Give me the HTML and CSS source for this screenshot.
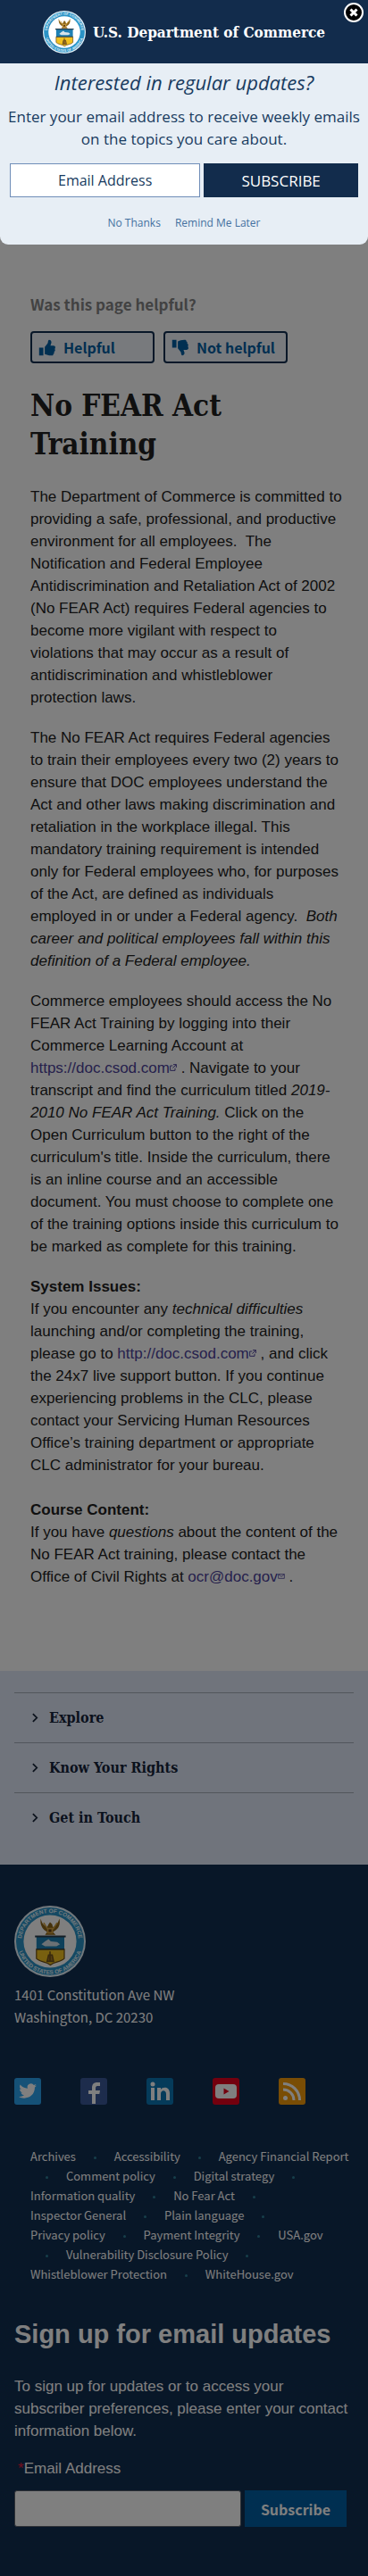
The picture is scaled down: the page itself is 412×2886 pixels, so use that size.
FILE: index.html
```html
<!DOCTYPE html>
<html lang="en">
<head>
<meta charset="utf-8">
<meta name="viewport" content="width=device-width, initial-scale=1">
<title>No FEAR Act Training | U.S. Department of Commerce</title>
<link rel="stylesheet" href="styles.css">
</head>
<body>
<svg class="defs" width="0" height="0" aria-hidden="true">
  <defs>
    <path id="ring-top" d="M10 50a40 40 0 0 1 80 0"/>
    <path id="ring-bottom" d="M4 50a46 46 0 0 0 92 0"/>
    <symbol id="seal" viewBox="0 0 100 100">
      <circle cx="50" cy="50" r="50" fill="#e4f1f8"/>
      <circle cx="50" cy="50" r="47.500" fill="#2a93c6"/>
      <text class="seal-text"><textPath href="#ring-top" startOffset="50%">DEPARTMENT OF COMMERCE</textPath></text>
      <text class="seal-text"><textPath href="#ring-bottom" startOffset="50%">UNITED STATES OF AMERICA</textPath></text>
      <circle cx="50" cy="50" r="37" fill="#fff"/>
      <path d="M37 18c2 8 5 10 9 12l2-4 2-3 3 3 1 4c4-2 7-5 9-12 2 8-1 14-6 17l-3 2 4 4H43l3-4-4-3c-4-4-6-9-5-16z" fill="#8a6418"/>
      <path d="M41 24l6 9M60 24l-6 9M47 32h6v6h-6z" stroke="#d0a040" stroke-width="2" fill="#5d3b12"/>
      <path d="M31 43h39v18H31z" fill="#1d80b4"/>
      <path d="M31 61h39v13c-4 5-13 4-19.500 9C44 78 35 79 31 74z" fill="#f0c020" stroke="#6b4d15" stroke-width="1.500"/>
      <path d="M29 43h43" stroke="#263c4c" stroke-width="2.500"/>
      <path d="M31 61h39" stroke="#263c4c" stroke-width="1.500"/>
      <path d="M38 54l5-4 5-3 3 3 9 1 4 3-5 3H43z" fill="#d6e3ea"/>
      <path d="M50 64v15M46 78h9l-2-9h-5z" stroke="#71521b" stroke-width="2" fill="#a87a20"/>
    </symbol>
    <symbol id="thumb" viewBox="0 0 24 24">
      <path d="M1 12h6v11H1zM9 11l4-5c1-1 0-4 2-5 3 0 4 3 3 5l-1 3h4c4 0 3 4 2 5 1 1 1 3-1 4 1 1 0 3-1 3 0 2-1 2-3 2-4 0-6-1-9-2z"/>
    </symbol>
    <symbol id="external" viewBox="0 0 12 12">
      <path d="M5 3H1v8h8V7M6 1h5v5M11 1L5 7" fill="none" stroke="currentColor" stroke-width="1.500"/>
    </symbol>
    <symbol id="envelope" viewBox="0 0 12 9">
      <path d="M1 1h10v7H1zM1 1l5 4 5-4" fill="none" stroke="currentColor" stroke-width="1.200"/>
    </symbol>
  </defs>
</svg>

<main class="content">
  <section class="feedback" aria-labelledby="feedback-title">
    <h2 class="feedback-title" id="feedback-title">Was this page helpful?</h2>
    <div class="feedback-actions">
      <button class="feedback-button" type="button"><svg class="thumb" aria-hidden="true"><use href="#thumb"/></svg>Helpful</button>
      <button class="feedback-button" type="button"><svg class="thumb thumb-down" aria-hidden="true"><use href="#thumb"/></svg>Not helpful</button>
    </div>
  </section>

  <article class="article">
    <h1 class="article-title">No FEAR Act Training</h1>
    <p>The Department of Commerce is committed to providing a safe, professional, and productive environment for all employees.&nbsp; The Notification and Federal Employee Antidiscrimination and Retaliation Act of 2002 (No FEAR Act) requires Federal agencies to become more vigilant with respect to violations that may occur as a result of antidiscrimination and whistleblower protection laws.</p>
    <p>The No FEAR Act requires Federal agencies to train their employees every two (2) years to ensure that DOC employees understand the Act and other laws making discrimination and retaliation in the workplace illegal. This mandatory training requirement is intended only for Federal employees who, for purposes of the Act, are defined as individuals employed in or under a Federal agency.&nbsp; <em>Both career and political employees fall within this definition of a Federal employee.</em></p>
    <p>Commerce employees should access the No FEAR Act Training by logging into their Commerce Learning Account at <a href="#">https://doc.csod.com<svg class="link-icon" aria-hidden="true"><use href="#external"/></svg></a> . Navigate to your transcript and find the curriculum titled <em>2019-2010 No FEAR Act Training.</em> Click on the Open Curriculum button to the right of the curriculum's title. Inside the curriculum, there is an inline course and an accessible document. You must choose to complete one of the training options inside this curriculum to be marked as complete for this training.</p>
    <p><strong>System Issues:</strong><br>If you encounter any <em>technical difficulties</em> launching and/or completing the training, please go to <a href="#">http://doc.csod.com<svg class="link-icon" aria-hidden="true"><use href="#external"/></svg></a> , and click the 24x7 live support button. If you continue experiencing problems in the CLC, please contact your Servicing Human Resources Office’s training department or appropriate CLC administrator for your bureau.<br><br><strong>Course Content:</strong><br>If you have <em>questions</em> about the content of the No FEAR Act training, please contact the Office of Civil Rights at <a href="#">ocr@doc.gov<svg class="link-icon" aria-hidden="true"><use href="#envelope"/></svg></a> .</p>
  </article>
</main>

<nav class="sections" aria-label="Sections">
  <button class="section-toggle" type="button"><svg class="chevron" viewBox="0 0 8 12" aria-hidden="true"><path d="M1 1l5 5-5 5"/></svg>Explore</button>
  <button class="section-toggle" type="button"><svg class="chevron" viewBox="0 0 8 12" aria-hidden="true"><path d="M1 1l5 5-5 5"/></svg>Know Your Rights</button>
  <button class="section-toggle" type="button"><svg class="chevron" viewBox="0 0 8 12" aria-hidden="true"><path d="M1 1l5 5-5 5"/></svg>Get in Touch</button>
</nav>

<footer class="footer">
  <svg class="footer-seal" role="img" aria-label="Department of Commerce seal"><use href="#seal"/></svg>
  <address class="address">1401 Constitution Ave NW<br>Washington, DC 20230</address>

  <div class="social">
    <a href="#" aria-label="Twitter"><svg viewBox="0 0 30 30"><rect width="30" height="30" rx="3" fill="#2aa3ef"/><path d="M25 8.500c-.8.400-1.500.6-2.300.7.800-.5 1.400-1.300 1.700-2.200-.8.500-1.600.8-2.500 1a4 4 0 0 0-7 3.700c-3.300-.2-6.300-1.800-8.300-4.200-1 1.900-.6 4.200 1.200 5.400-.6 0-1.200-.2-1.800-.5 0 2 1.400 3.600 3.200 4-.6.200-1.200.2-1.800.1.500 1.600 2 2.700 3.700 2.800A8 8 0 0 1 5 21c6.500 4 18 .8 18-10.400.8-.6 1.500-1.300 2-2.100z" fill="#fff"/></svg></a>
    <a href="#" aria-label="Facebook"><svg viewBox="0 0 30 30"><rect width="30" height="30" rx="3" fill="#3b5998"/><path d="M13 29V18H9v-4h4v-3c0-4 2-6 6-6h3v4h-2c-2 0-3 .6-3 2.500V14h5l-.7 4H17v11z" fill="#fff"/></svg></a>
    <a href="#" aria-label="LinkedIn"><svg viewBox="0 0 30 30"><rect width="30" height="30" rx="3" fill="#0a77b5"/><path d="M5 11h4v14H5zM12 11h4v2c2-3.500 10-3.500 10 4v8h-4v-7c0-5-6-5-6 0v7h-4z" fill="#fff"/><circle cx="7" cy="7" r="2.500" fill="#fff"/></svg></a>
    <a href="#" aria-label="YouTube"><svg viewBox="0 0 30 30"><rect width="30" height="30" rx="3" fill="#e6001c"/><rect x="3" y="7" width="24" height="16" rx="4" fill="#fff"/><path d="M12.500 11.500v7l6-3.500z" fill="#e6001c"/></svg></a>
    <a href="#" aria-label="RSS"><svg viewBox="0 0 30 30"><rect width="30" height="30" rx="3" fill="#f39a0b"/><g fill="none" stroke="#fff" stroke-width="3"><path d="M5 6.500A18.500 18.500 0 0 1 23.500 25M5 13a12 12 0 0 1 12 12"/></g><circle cx="7.500" cy="22.500" r="2.500" fill="#fff"/></svg></a>
  </div>

  <div class="footer-links">
    <a href="#">Archives</a> <i class="dot"></i>
    <a href="#">Accessibility</a> <i class="dot"></i>
    <a href="#">Agency Financial Report</a> <i class="dot"></i>
    <a href="#">Comment policy</a> <i class="dot"></i>
    <a href="#">Digital strategy</a> <i class="dot"></i>
    <a href="#">Information quality</a> <i class="dot"></i>
    <a href="#">No Fear Act</a> <i class="dot"></i>
    <a href="#">Inspector General</a> <i class="dot"></i>
    <a href="#">Plain language</a> <i class="dot"></i>
    <a href="#">Privacy policy</a> <i class="dot"></i>
    <a href="#">Payment Integrity</a> <i class="dot"></i>
    <a href="#">USA.gov</a> <i class="dot"></i>
    <a href="#">Vulnerability Disclosure Policy</a> <i class="dot"></i>
    <a href="#">Whistleblower Protection</a> <i class="dot"></i>
    <a href="#">WhiteHouse.gov</a>
  </div>

  <form class="signup">
    <h2 class="signup-title">Sign up for email updates</h2>
    <p class="signup-text">To sign up for updates or to access your subscriber preferences, please enter your contact information below.</p>
    <label class="signup-label" for="footer-email"><span class="required">*</span>Email Address</label>
    <div class="signup-row">
      <input class="signup-input" id="footer-email" type="email">
      <button class="signup-button" type="button">Subscribe</button>
    </div>
  </form>
</footer>

<div class="overlay">
  <section class="modal" role="dialog" aria-labelledby="modal-title">
    <header class="modal-header">
      <svg class="modal-seal" aria-hidden="true"><use href="#seal"/></svg>
      <span>U.S. Department of Commerce</span>
      <button class="modal-close" type="button" aria-label="Close"><svg viewBox="0 0 24 24" aria-hidden="true"><circle cx="12" cy="12" r="10" fill="#000" stroke="#fff" stroke-width="2"/><path d="M8.500 8.500l7 7M15.500 8.500l-7 7" stroke="#fff" stroke-width="3"/></svg></button>
    </header>
    <form class="modal-body">
      <h2 class="modal-title" id="modal-title">Interested in regular updates?</h2>
      <p class="modal-text">Enter your email address to receive weekly emails on the topics you care about.</p>
      <div class="modal-row">
        <input class="modal-input" type="email" placeholder="Email Address" aria-label="Email Address">
        <button class="modal-button" type="button">SUBSCRIBE</button>
      </div>
      <div class="modal-links"><a href="#">No Thanks</a><a href="#">Remind Me Later</a></div>
    </form>
  </section>
</div>
</body>
</html>
```
FILE: styles.css
```css
* { box-sizing: border-box; }

:root {
  --navy: #112e51;
  --sans: "Liberation Sans", Arial, sans-serif;
  --source: "Noto Sans CJK SC", "Noto Sans", sans-serif;
  --serif: "DejaVu Serif Condensed", "DejaVu Serif", serif;
  --open: "Open Sans", "Noto Sans", sans-serif;
}

body {
  position: relative;
  margin: 0;
  background: #fff;
  color: #212121;
  font: 17px/25px var(--sans);
}

h1, h2, p { margin: 0; }
a { text-decoration: none; }
button, input { font: inherit; }
.defs { position: absolute; }

.seal-text {
  fill: #e4f1f8;
  font: bold 8px var(--sans);
  text-anchor: middle;
}

/* Main content */
.content { padding: 328px 28px 93px 34px; }

.feedback-title {
  color: #858585;
  font: bold 17px/26px var(--source);
}
.feedback-actions {
  display: flex;
  gap: 10px;
  margin-top: 17px;
}
.feedback-button {
  display: flex;
  align-items: center;
  gap: 9px;
  width: 139px;
  height: 36px;
  padding: 0 7px;
  border: 2px solid var(--navy);
  border-radius: 4px;
  background: #f0f4fb;
  color: #005ea2;
  font: bold 16px/24px var(--source);
  white-space: nowrap;
}
.thumb {
  flex: none;
  width: 19px;
  height: 19px;
  fill: currentColor;
}
.thumb-down { transform: scaleY(-1); }

.article-title {
  margin: 26px 0 25px;
  font: bold 33px/43px var(--serif);
}
.article p + p { margin-top: 20px; }
.article a { color: #4c4299; }
.link-icon {
  width: 8px;
  height: 8px;
  margin-bottom: 2px;
}

/* Collapsed section menu */
.sections {
  padding: 24px 16px 25px;
  background: #e1e9f8;
}
.section-toggle {
  display: flex;
  align-items: center;
  gap: 12px;
  width: 100%;
  height: 56px;
  padding: 0 20px;
  border: 0;
  border-top: 1px solid #a4acb9;
  background: none;
  color: #152238;
  font: bold 16px/24px var(--serif);
}
.chevron {
  width: 7px;
  height: 11px;
  fill: none;
  stroke: currentColor;
  stroke-width: 2;
}

/* Footer */
.footer {
  padding: 46px 16px 55px;
  background: var(--navy);
  color: #fff;
}
.footer-seal {
  display: block;
  width: 80px;
  height: 80px;
}
.address {
  margin-top: 7px;
  font: 15px/25px var(--source);
}
.social {
  display: flex;
  gap: 44px;
  margin-top: 56px;
}
.social svg {
  display: block;
  width: 30px;
  height: 30px;
}
.footer-links {
  margin-top: 47px;
  padding-left: 18px;
  font: 13px/22px var(--source);
}
.footer-links a {
  color: #fff;
  white-space: nowrap;
}
.dot {
  display: inline-block;
  width: 3px;
  height: 3px;
  margin: 0 17px;
  border-radius: 50%;
  background: #2e7f96;
  vertical-align: middle;
}
.signup-title {
  margin-top: 38px;
  font: bold 29px/36px var(--sans);
}
.signup-text { margin-top: 28px; }
.signup-label {
  display: block;
  margin-top: 17px;
  padding-left: 4px;
}
.required { color: #e31c3d; }
.signup-row {
  display: flex;
  gap: 4px;
  margin-top: 12px;
  padding-right: 8px;
}
.signup-input {
  flex: 1;
  min-width: 0;
  height: 41px;
  border: 1px solid #5b616b;
  border-radius: 3px;
  background: #fff;
}
.signup-button {
  width: 114px;
  height: 41px;
  padding: 0;
  border: 0;
  background: #005ea2;
  color: #fff;
  font: bold 16px/24px var(--source);
}

/* Subscription prompt over the page */
.overlay {
  position: absolute;
  inset: 0;
  background: rgba(0, 0, 0, .5);
}
.modal {
  overflow: hidden;
  border-radius: 0 0 9px 9px;
  background: #e7eef5;
  color: #183b60;
  font-family: var(--open);
  text-align: center;
}
.modal-header {
  position: relative;
  display: flex;
  align-items: center;
  justify-content: center;
  gap: 8px;
  height: 71px;
  background: #122c4c;
  color: #fff;
  font: bold 17px/24px var(--serif);
}
.modal-seal {
  width: 48px;
  height: 48px;
}
.modal-close {
  position: absolute;
  top: 2px;
  right: 4px;
  width: 24px;
  height: 24px;
  padding: 0;
  border: 0;
  background: none;
}
.modal-close svg { display: block; }
.modal-body { padding: 6px 4px 15px; }
.modal-title {
  font: italic 22px/30px var(--open);
}
.modal-text {
  margin-top: 11px;
  font-size: 17px;
}
.modal-row {
  display: flex;
  gap: 4px;
  margin-top: 15px;
  padding: 0 7px;
}
.modal-input {
  flex: 6;
  min-width: 0;
  height: 38px;
  border: 1px solid #6f8db8;
  background: #fff;
  text-align: center;
  font-size: 16px;
}
.modal-input::placeholder {
  color: #183b60;
  opacity: 1;
}
.modal-button {
  flex: 5;
  height: 38px;
  padding: 0;
  border: 0;
  background: #122c4c;
  color: #fff;
}
.modal-links {
  display: flex;
  justify-content: center;
  gap: 16px;
  margin-top: 20px;
  font-size: 12px;
  line-height: 18px;
}
.modal-links a { color: #44719f; }
```
